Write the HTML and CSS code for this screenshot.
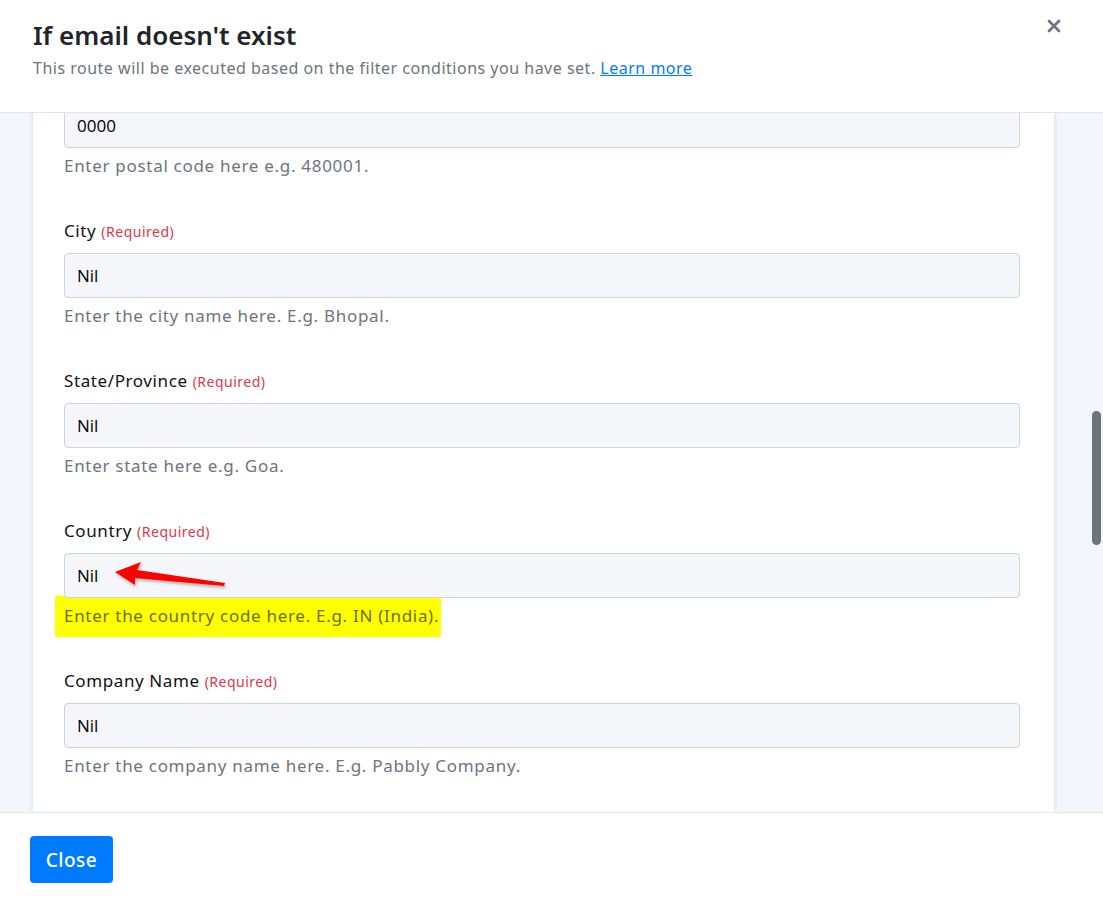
FILE: index.html
```html
<!DOCTYPE html>
<html lang="en">
<head>
  <meta charset="UTF-8" />
  <title>If email doesn't exist</title>
  <link rel="stylesheet" href="styles.css">
</head>
<body>

<div class="modal">
  <div class="modal-header">
    <h1 class="title">If email doesn't exist</h1>
    <p class="sub">This route will be executed based on the filter conditions you have set. <a href="#">Learn more</a></p>
    <button class="close-x" aria-label="Close">
      <svg width="14" height="14" viewBox="0 0 14 14">
        <path d="M2 2 L12 12 M12 2 L2 12" stroke="#6c757d" stroke-width="2.8" stroke-linecap="round"/>
      </svg>
    </button>
  </div>

  <div class="modal-body">
    <div class="card">
      <div class="fields">
        <!-- postal code field, scrolled so its label is out of view -->
        <div class="field">
          <div class="input">0000</div>
          <p class="hint">Enter postal code here e.g. 480001.</p>
        </div>

        <div class="field">
          <label>City <span class="req">(Required)</span></label>
          <div class="input">Nil</div>
          <p class="hint">Enter the city name here. E.g. Bhopal.</p>
        </div>

        <div class="field">
          <label>State/Province <span class="req">(Required)</span></label>
          <div class="input">Nil</div>
          <p class="hint">Enter state here e.g. Goa.</p>
        </div>

        <div class="field">
          <label>Country <span class="req">(Required)</span></label>
          <div class="input arrow-wrap">
            Nil
            <svg class="arrow" width="130" height="34" viewBox="0 0 130 34">
              <defs>
                <filter id="sh" x="-20%" y="-50%" width="140%" height="200%">
                  <feDropShadow dx="1" dy="2" stdDeviation="1.5" flood-color="#000" flood-opacity="0.3"/>
                </filter>
              </defs>
              <polygon filter="url(#sh)" fill="#ff0000"
                points="4,14 30,4 26,12 114,25 113,28 24,20 24,27"/>
            </svg>
          </div>
          <p class="hint"><span class="mark">Enter the country code here. E.g. IN (India).</span></p>
        </div>

        <div class="field">
          <label>Company Name <span class="req">(Required)</span></label>
          <div class="input">Nil</div>
          <p class="hint">Enter the company name here. E.g. Pabbly Company.</p>
        </div>
      </div>
    </div>
    <div class="scroll-thumb"></div>
  </div>

  <div class="modal-footer">
    <button class="btn">Close</button>
  </div>
</div>

</body>
</html>
```

FILE: styles.css
```css
html, body {
  margin: 0;
  padding: 0;
  background: #fff;
  font-family: 'Noto Sans', sans-serif;
  color: #212529;
}

.modal {
  width: 1103px;
  height: 902px;
  display: flex;
  flex-direction: column;
  overflow: hidden;
}

.modal-header {
  position: relative;
  height: 113px;
  box-sizing: border-box;
  padding: 19px 33px 0;
  border-bottom: 1px solid #dfe6f1;
  flex-shrink: 0;
}

.title {
  margin: 0;
  font-size: 26px;
  line-height: 32px;
  font-weight: 600;
  color: #212529;
}

.sub {
  margin: 5px 0 0;
  font-size: 16px;
  line-height: 24px;
  letter-spacing: 0.5px;
  color: #6c757d;
}

.sub a {
  color: #007bff;
  text-decoration: underline;
}

.close-x {
  position: absolute;
  top: 19px;
  right: 42px;
  border: 0;
  background: none;
  padding: 0;
  line-height: 0;
}

.modal-body {
  position: relative;
  height: 699px;
  overflow: hidden;
  background: #f3f6fa;
  flex-shrink: 0;
}

.card {
  margin: 0 49px 0 33px;
  height: 100%;
  overflow: hidden;
  background: #fff;
  box-shadow: 0 0 4px rgba(40, 80, 160, 0.18);
  padding: 0 34px 0 31px;
  box-sizing: border-box;
}

.fields {
  margin-top: -10px;
}

.field {
  padding-bottom: 43px;
}

.field label {
  display: block;
  height: 22px;
  font-size: 17px;
  line-height: 22px;
  letter-spacing: 0.6px;
  margin-bottom: 11px;
  color: #111;
}

.req {
  font-size: 14px;
  letter-spacing: 0.5px;
  color: #e0364a;
}

.input {
  height: 45px;
  box-sizing: border-box;
  border: 1px solid #ced4da;
  border-radius: 4px;
  background: #f4f6f9;
  padding: 0 12px;
  font-family: 'Open Sans', sans-serif;
  font-size: 17px;
  line-height: 43px;
  color: #000;
}

.arrow-wrap {
  position: relative;
}

.arrow {
  position: absolute;
  left: 46px;
  top: 4px;
}

.hint {
  margin: 7px 0 0;
  height: 22px;
  font-size: 17px;
  line-height: 22px;
  letter-spacing: 0.7px;
  color: #6c757d;
}

.mark {
  background: #ffff00;
  color: #6b7000;
  padding: 8px 2px 10px 9px;
  margin-left: -9px;
}

.scroll-thumb {
  position: absolute;
  right: 2px;
  top: 298px;
  width: 9px;
  height: 134px;
  border-radius: 5px;
  background: #6c757d;
}

.modal-footer {
  border-top: 1px solid #dfe6f1;
  padding: 23px 30px 0;
  flex: 1;
}

.btn {
  width: 83px;
  height: 47px;
  border: 0;
  border-radius: 4px;
  background: #007bff;
  color: #fff;
  font-family: 'Noto Sans', sans-serif;
  font-size: 19px;
  font-weight: 500;
  letter-spacing: 0.5px;
}
```
